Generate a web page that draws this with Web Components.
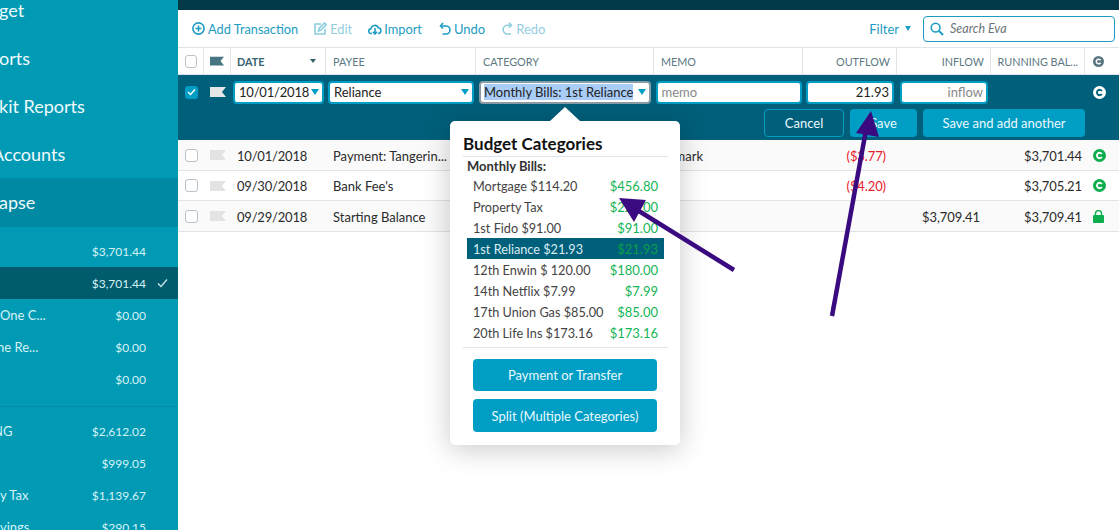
<!DOCTYPE html>
<html>
<head>
<meta charset="utf-8">
<style>
  html, body { margin: 0; height: 100%; overflow: hidden; }
  body {
    font-family: "Lato", sans-serif;
    --cols: 26px 27px 95px 150px 178px 149px 94px 94px 94px 34px;
    --blue: #009dc4;
    --line: #dfe3ea;
  }
</style>
</head>
<body>
<app-shell>
  <app-sidebar slot="side">
    <nav-item>get</nav-item>
    <nav-item>orts</nav-item>
    <nav-item>kit Reports</nav-item>
    <nav-item offset="-8">Accounts</nav-item>
    <nav-item active>apse</nav-item>
    <account-row first amount="$3,701.44"></account-row>
    <account-row amount="$3,701.44" selected></account-row>
    <account-row amount="$0.00">One C...</account-row>
    <account-row amount="$0.00" offset="-3">ne Re...</account-row>
    <account-row amount="$0.00"></account-row>
    <hr>
    <account-row amount="$2,612.02" offset="-7">NG</account-row>
    <account-row amount="$999.05"></account-row>
    <account-row amount="$1,139.67">y Tax</account-row>
    <account-row amount="$290.15">vings</account-row>
  </app-sidebar>
  <reg-toolbar></reg-toolbar>
  <reg-header></reg-header>
  <edit-row></edit-row>
  <reg-row date="10/01/2018" payee="Payment: Tangerin..." memo="Remark" outflow="($3.77)" balance="$3,701.44" state="cleared" alt></reg-row>
  <reg-row date="09/30/2018" payee="Bank Fee's" outflow="($4.20)" balance="$3,705.21" state="cleared"></reg-row>
  <reg-row date="09/29/2018" payee="Starting Balance" inflow="$3,709.41" balance="$3,709.41" state="locked" alt></reg-row>
</app-shell>
<category-popover>
  <budget-item name="Mortgage $114.20" amount="$456.80"></budget-item>
  <budget-item name="Property Tax" amount="$228.00"></budget-item>
  <budget-item name="1st Fido $91.00" amount="$91.00"></budget-item>
  <budget-item name="1st Reliance $21.93" amount="$21.93" selected></budget-item>
  <budget-item name="12th Enwin $ 120.00" amount="$180.00"></budget-item>
  <budget-item name="14th Netflix $7.99" amount="$7.99"></budget-item>
  <budget-item name="17th Union Gas $85.00" amount="$85.00"></budget-item>
  <budget-item name="20th Life Ins $173.16" amount="$173.16"></budget-item>
</category-popover>
<note-arrows></note-arrows>

<script>
const flag = (color) => `<svg width="16" height="10" viewBox="0 0 16 10"><path d="M0 0H16L12 5L16 10H0Z" fill="${color}"/></svg>`

class AppShell extends HTMLElement {
  connectedCallback () {
    this.attachShadow({ mode: 'open' }).innerHTML = `
    <style>
      :host{ display: flex; height: 530px; width: 1119px; overflow: hidden; }
      .side{ flex: 0 0 178px; }
      main{ flex: 1; background: white; display: flex; flex-direction: column; }
      .top{ height: 10px; background: #013948; flex: none; }
    </style>
    <div class="side"><slot name="side"></slot></div>
    <main><div class="top"></div><slot></slot></main>`
  }
}

class AppSidebar extends HTMLElement {
  connectedCallback () {
    this.attachShadow({ mode: 'open' }).innerHTML = `
    <style>
      :host{ display: block; height: 530px; background: #009ab4; overflow: hidden; color: white; }
      ::slotted(hr){ border: none; border-top: 1px solid #0889a2; margin: 11px 0 8px; }
      .inner{ margin-top: -14px; }
    </style>
    <div class="inner"><slot></slot></div>`
  }
}

class NavItem extends HTMLElement {
  connectedCallback () {
    const offset = this.getAttribute('offset') || -1
    this.attachShadow({ mode: 'open' }).innerHTML = `
    <style>
      :host{ display: flex; align-items: center; height: 48px; font-size: 18px; color: #f1fbfd; overflow: hidden; }
      :host([active]){ background: #0089a2; height: 49px; padding-bottom: 2px; box-sizing: border-box; }
      span{ margin-left: ${offset}px; white-space: nowrap; }
    </style>
    <span><slot></slot></span>`
  }
}

class AccountRow extends HTMLElement {
  connectedCallback () {
    const amount = this.getAttribute('amount')
    const offset = this.getAttribute('offset') || 0
    this.attachShadow({ mode: 'open' }).innerHTML = `
    <style>
      :host{ display: flex; align-items: center; height: 32px; font-size: 13px; color: #d6f2f7; padding-right: 32px; box-sizing: border-box; position: relative; overflow: hidden; }
      :host([first]){ margin-top: 8px; }
      :host([selected]){ background: #005b6c; }
      .name{ flex: 1; white-space: nowrap; margin-left: ${offset}px; }
      .amount{ font-size: 12px; }
      .check{ display: none; position: absolute; left: 157px; top: 11px; }
      :host([selected]) .check{ display: block; }
    </style>
    <span class="name"><slot></slot></span>
    <span class="amount">${amount}</span>
    <svg class="check" width="11" height="10" viewBox="0 0 11 10"><path d="M1 5.5L4 8.5L10 1.5" fill="none" stroke="#cfe6ea" stroke-width="1.3"/></svg>`
  }
}

class RegToolbar extends HTMLElement {
  connectedCallback () {
    const s = 'fill="none" stroke="currentColor" stroke-width="1.6"'
    this.attachShadow({ mode: 'open' }).innerHTML = `
    <style>
      :host{ display: flex; align-items: center; flex: none; height: 37px; padding: 0 4px 0 14px; gap: 16px; font-size: 12.8px; color: #1d9cc1; box-sizing: border-box; }
      .btn{ display: flex; align-items: center; gap: 3px; white-space: nowrap; }
      .tight{ gap: 2px; }
      .undo{ margin-left: 1px; font-size: 13px; }
      .redo{ font-size: 13px; }
      .off{ opacity: .5; }
      .filter{ margin-left: auto; display: flex; align-items: center; gap: 6px; margin-right: -4px; font-size: 13px; }
      .tri{ width: 0; height: 0; border: 3.5px solid transparent; border-top: 5px solid #1d9cc1; border-bottom: 0; }
      .search{ width: 192px; height: 26px; border: 1px solid #1d9cc1; border-radius: 4px; box-sizing: border-box; display: flex; align-items: center; gap: 6px; padding-left: 6px; color: #6c7479; font-style: italic; font-size: 12.5px; }
      svg{ display: block; flex: none; }
    </style>
    <div class="btn"><svg width="13" height="13" viewBox="0 0 13 13"><circle cx="6.5" cy="6.5" r="5.6" ${s}/><path d="M3.5 6.5H9.5M6.5 3.5V9.5" ${s}/></svg>Add Transaction</div>
    <div class="btn off"><svg width="13" height="13" viewBox="0 0 13 13"><path d="M11 7V12H1V2H7" ${s}/><path d="M4.5 9L5 6.5L10.5 1L12.2 2.7L6.7 8.3Z" ${s} stroke-width="1.2"/></svg>Edit</div>
    <div class="btn tight"><svg width="14" height="12" viewBox="0 0 14 12"><path d="M4 10.5H3.2A2.4 2.4 0 0 1 3 5.7A3.8 3.8 0 0 1 10.3 4.8A2.9 2.9 0 0 1 10.7 10.5H10" ${s}/><path d="M7 5V11M4.8 8.8L7 11L9.2 8.8" ${s}/></svg>Import</div>
    <div class="btn undo"><svg width="12" height="13" viewBox="0 0 12 13"><path d="M3 4H7A4 4 0 0 1 7 12H3.5" ${s}/><path d="M4 1L1.5 4L4 6.5" ${s}/></svg>Undo</div>
    <div class="btn redo off"><svg width="12" height="13" viewBox="0 0 12 13"><path d="M9 3.2H6.5A4.3 4.3 0 0 0 6.5 12H10" ${s}/><path d="M8 .8L10.5 3.2L8 5.8" ${s}/></svg>Redo</div>
    <div class="filter">Filter<span class="tri"></span></div>
    <div class="search"><svg width="14" height="14" viewBox="0 0 14 14"><circle cx="5.6" cy="5.6" r="4.4" fill="none" stroke="#1d9cc1" stroke-width="1.6"/><path d="M9 9L13 13" stroke="#1d9cc1" stroke-width="2"/></svg>Search Eva</div>`
  }
}

class RegHeader extends HTMLElement {
  connectedCallback () {
    this.attachShadow({ mode: 'open' }).innerHTML = `
    <style>
      :host{ display: grid; grid-template-columns: var(--cols); height: 28px; flex: none; border-top: 1px solid var(--line); border-bottom: 1px solid var(--line); box-sizing: border-box; font-size: 10.8px; color: #5b7883; }
      div{ display: flex; align-items: center; padding: 0 6px 0 7px; border-right: 1px solid var(--line); box-sizing: border-box; white-space: nowrap; }
      div:last-child{ border-right: 0; }
      .r{ justify-content: flex-end; }
      .date{ font-weight: 700; color: #36626f; justify-content: space-between; padding: 0 9px 0 6px; }
      .tri{ width: 0; height: 0; border: 3px solid transparent; border-top: 4px solid #36626f; border-bottom: 0; }
      .box{ width: 13px; height: 13px; border: 1px solid #b9c3c9; border-radius: 3px; box-sizing: border-box; }
    </style>
    <div><span class="box"></span></div>
    <div style="padding-left:6px">${flag('#457583')}</div>
    <div class="date">DATE<span class="tri"></span></div>
    <div>PAYEE</div>
    <div>CATEGORY</div>
    <div>MEMO</div>
    <div class="r">OUTFLOW</div>
    <div class="r">INFLOW</div>
    <div class="r">RUNNING BAL...</div>
    <div style="padding-left:8px"><cleared-icon size="11" color="#5b7680"></cleared-icon></div>`
  }
}

class ClearedIcon extends HTMLElement {
  connectedCallback () {
    const color = this.getAttribute('color')
    const size = this.getAttribute('size') || 13
    this.attachShadow({ mode: 'open' }).innerHTML = `
    <style>:host{ display: block; } svg{ display: block; }</style>
    <svg width="${size}" height="${size}" viewBox="0 0 12 12"><circle cx="6" cy="6" r="6" fill="${color}"/><path d="M8.2 4.6A2.5 2.5 0 1 0 8.2 7.4" fill="none" stroke="${this.getAttribute('ink') || 'white'}" stroke-width="1.7"/></svg>`
  }
}

class EditRow extends HTMLElement {
  connectedCallback () {
    const tri = '<span class="tri"></span>'
    this.attachShadow({ mode: 'open' }).innerHTML = `
    <style>
      :host{ display: block; flex: none; height: 65px; background: #005f7a; box-sizing: border-box; padding-top: 5px; }
      .fields{ display: grid; grid-template-columns: var(--cols); height: 24px; align-items: center; }
      .cell{ display: flex; justify-content: center; }
      .icon{ justify-content: flex-start; padding-left: 8px; }
      .in{ display: flex; align-items: center; justify-content: space-between; height: 23px; background: white; border: 2px solid var(--blue); border-radius: 4px; box-sizing: border-box; font-size: 13px; color: #222; padding: 0 2px 0 4px; white-space: nowrap; }
      .date{ letter-spacing: -.2px; }
      .ph{ color: #888; }
      .end{ justify-content: flex-end; padding-right: 3px; }
      .focus{ border-color: #8b9ca6; padding-left: 3px; }
      .focus b{ font-weight: 400; background: #a9cdf7; }
      .tri{ width: 0; height: 0; border: 4px solid transparent; border-top: 6px solid var(--blue); border-bottom: 0; margin-right: 1px; }
      .box{ width: 13px; height: 13px; background: var(--blue); border-radius: 3px; display: flex; align-items: center; justify-content: center; }
      .btns{ display: flex; justify-content: flex-end; gap: 6px; margin-top: 5px; padding-right: 34px; }
      .btn{ display: flex; align-items: center; justify-content: center; height: 28px; border-radius: 4px; font-size: 13px; color: #eafaff; background: var(--blue); box-sizing: border-box; }
      .cancel{ background: transparent; border: 1px solid var(--blue); width: 80px; }
    </style>
    <div class="fields">
      <div class="cell"><span class="box"><svg width="9" height="8" viewBox="0 0 9 8"><path d="M1 4L3.5 6.5L8 1.5" fill="none" stroke="white" stroke-width="1.4"/></svg></span></div>
      <div class="cell">${flag('#e6e6e6')}</div>
      <div class="cell"><div class="in date" style="width:91px">10/01/2018${tri}</div></div>
      <div class="cell"><div class="in" style="width:146px">Reliance${tri}</div></div>
      <div class="cell"><div class="in focus" style="width:172px"><b>Monthly Bills: 1st Reliance</b>${tri}</div></div>
      <div class="cell"><div class="in ph" style="width:146px">memo</div></div>
      <div class="cell"><div class="in end" style="width:88px">21.93</div></div>
      <div class="cell"><div class="in end ph" style="width:88px">inflow</div></div>
      <div></div>
      <div class="cell icon"><cleared-icon color="white" ink="#005f7a"></cleared-icon></div>
    </div>
    <div class="btns">
      <div class="btn cancel">Cancel</div>
      <div class="btn" style="width:67px">Save</div>
      <div class="btn" style="width:162px">Save and add another</div>
    </div>`
  }
}

class RegRow extends HTMLElement {
  connectedCallback () {
    const a = (n) => this.getAttribute(n) || ''
    const icon = a('state') === 'locked'
      ? '<svg width="11" height="13" viewBox="0 0 11 13"><path d="M2.5 6V3.5A3 3 0 0 1 8.5 3.5V6" fill="none" stroke="#0cae4e" stroke-width="1.4"/><rect y="5" width="11" height="8" rx="1" fill="#0cae4e"/></svg>'
      : '<cleared-icon color="#0cae4e"></cleared-icon>'
    this.attachShadow({ mode: 'open' }).innerHTML = `
    <style>
      :host{ display: grid; grid-template-columns: var(--cols); height: 30px; flex: none; align-items: center; border-bottom: 1px solid var(--line); box-sizing: border-box; font-size: 13px; color: #2b2b2b; }
      :host([alt]){ background: #fafafa; height: 31px; }
      :host([alt]) .t{ padding-top: 1px; }
      .c{ display: flex; justify-content: center; }
      .t{ padding: 0 6px; white-space: nowrap; overflow: hidden; }
      .date{ letter-spacing: -.2px; }
      .payee{ padding-left: 7px; }
      .r{ text-align: right; padding-right: 11px; letter-spacing: -.1px; }
      .bal{ padding-right: 3px; }
      .red{ color: #e8202c; }
      .icon{ justify-content: flex-start; padding-left: 8px; }
      .box{ width: 13px; height: 13px; border: 1px solid #b9c3c9; border-radius: 3px; box-sizing: border-box; background: white; }
      svg{ display: block; }
    </style>
    <div class="c"><span class="box"></span></div>
    <div class="c">${flag('#e3e3e3')}</div>
    <div class="t date">${a('date')}</div>
    <div class="t payee">${a('payee')}</div>
    <div class="t"></div>
    <div class="t">${a('memo')}</div>
    <div class="t r red">${a('outflow')}</div>
    <div class="t r">${a('inflow')}</div>
    <div class="t r bal">${a('balance')}</div>
    <div class="c icon">${icon}</div>`
  }
}

class CategoryPopover extends HTMLElement {
  connectedCallback () {
    this.attachShadow({ mode: 'open' }).innerHTML = `
    <style>
      :host{ position: absolute; left: 450px; top: 121px; width: 230px; height: 324px; background: white; border-radius: 5px; box-shadow: 0 4px 28px rgba(0,0,0,.22); box-sizing: border-box; padding: 12px 12px 0 13px; color: #333; }
      .caret{ position: absolute; left: 100px; top: -14px; width: 0; height: 0; border: 15px solid transparent; border-bottom: 14px solid white; border-top: 0; }
      h3{ margin: 0; font-size: 17px; line-height: 21px; color: #111; padding-bottom: 2px; border-bottom: 1px solid #dfe3ea; font-weight: 700; }
      h4{ margin: 0 0 0 4px; font-size: 13px; line-height: 18px; font-weight: 700; }
      hr{ border: none; border-top: 1px solid #dfe3ea; margin: 4px 0 11px; }
      button{ display: block; width: 184px; height: 32px; margin: 0 0 8px 10px; background: #009dc4; border: none; border-radius: 4px; font: 13px "Lato", sans-serif; color: #eafaff; padding: 0; }
      button + button{ height: 33px; }
      .list{ margin: 0 4px; }
    </style>
    <div class="caret"></div>
    <h3>Budget Categories</h3>
    <h4>Monthly Bills:</h4>
    <div class="list"><slot></slot></div>
    <hr>
    <button>Payment or Transfer</button>
    <button>Split (Multiple Categories)</button>`
  }
}

class BudgetItem extends HTMLElement {
  connectedCallback () {
    this.attachShadow({ mode: 'open' }).innerHTML = `
    <style>
      :host{ display: flex; justify-content: space-between; align-items: center; height: 21px; padding: 0 6px; font-size: 13px; color: #444; white-space: nowrap; }
      :host([selected]){ background: #005f7a; color: #dbeef3; }
      span{ font-size: 12.7px; }
      b{ font-weight: 400; color: #15b556; }
      :host([selected]) b{ color: #0c9e4a; }
    </style>
    <span>${this.getAttribute('name')}</span><b>${this.getAttribute('amount')}</b>`
  }
}

class NoteArrows extends HTMLElement {
  connectedCallback () {
    this.attachShadow({ mode: 'open' }).innerHTML = `
    <style>:host{ position: absolute; left: 0; top: 0; pointer-events: none; } svg{ display: block; }</style>
    <svg width="1119" height="530" viewBox="0 0 1119 530">
      <path d="M734 270L634 208" stroke="#3a0a80" stroke-width="4.5"/>
      <path d="M619 198L646 200L634 222Z" fill="#3a0a80"/>
      <path d="M832 316L866 130" stroke="#3a0a80" stroke-width="4.5"/>
      <path d="M871 111L856 133L879 137Z" fill="#3a0a80"/>
    </svg>`
  }
}

customElements.define('cleared-icon', ClearedIcon)
customElements.define('app-shell', AppShell)
customElements.define('app-sidebar', AppSidebar)
customElements.define('nav-item', NavItem)
customElements.define('account-row', AccountRow)
customElements.define('reg-toolbar', RegToolbar)
customElements.define('reg-header', RegHeader)
customElements.define('edit-row', EditRow)
customElements.define('reg-row', RegRow)
customElements.define('category-popover', CategoryPopover)
customElements.define('budget-item', BudgetItem)
customElements.define('note-arrows', NoteArrows)
</script>
</body>
</html>
